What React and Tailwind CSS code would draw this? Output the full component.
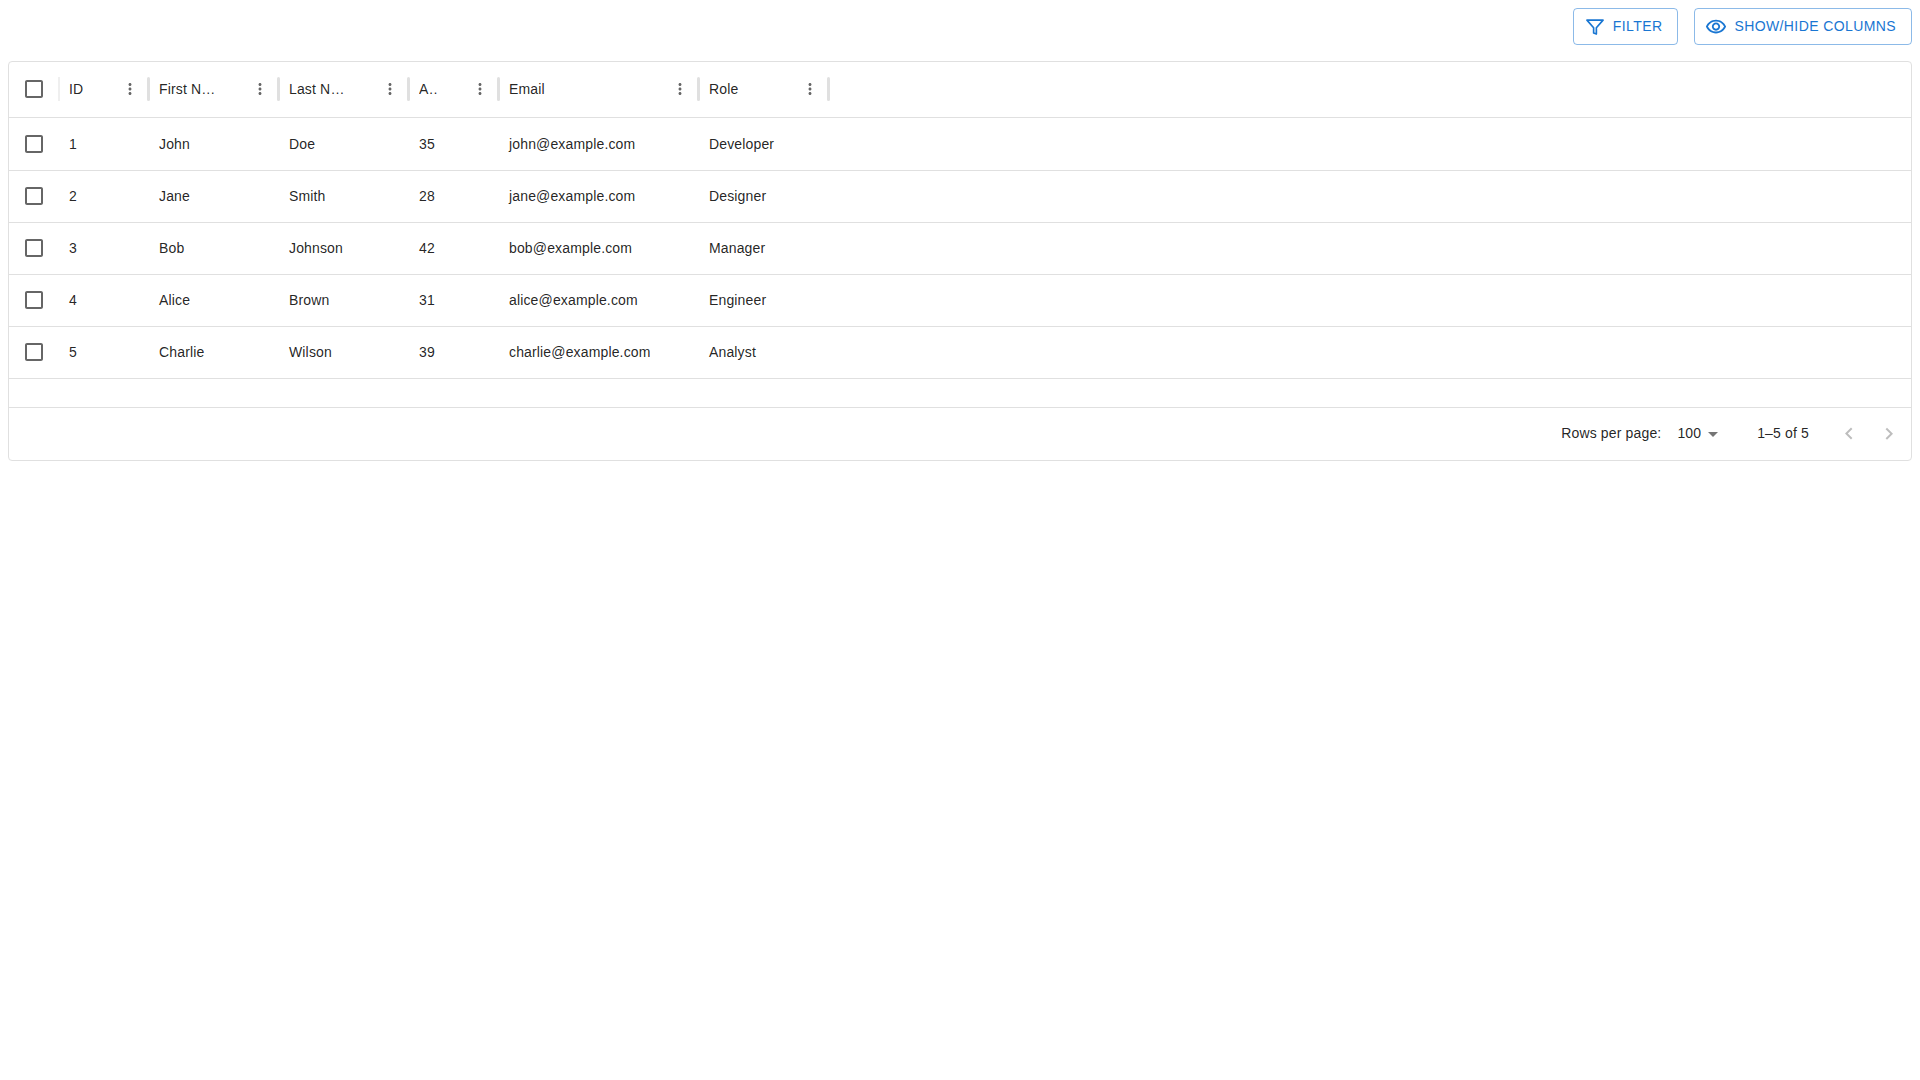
const rows = [
  { id: 1, first: "John", last: "Doe", age: 35, email: "john@example.com", role: "Developer" },
  { id: 2, first: "Jane", last: "Smith", age: 28, email: "jane@example.com", role: "Designer" },
  { id: 3, first: "Bob", last: "Johnson", age: 42, email: "bob@example.com", role: "Manager" },
  { id: 4, first: "Alice", last: "Brown", age: 31, email: "alice@example.com", role: "Engineer" },
  { id: 5, first: "Charlie", last: "Wilson", age: 39, email: "charlie@example.com", role: "Analyst" },
];

const Icon = ({ d, className }) => (
  <svg viewBox="0 0 24 24" fill="currentColor" className={className}>
    <path d={d} />
  </svg>
);

const CHECKBOX = "M19 5v14H5V5h14m0-2H5c-1.1 0-2 .9-2 2v14c0 1.1.9 2 2 2h14c1.1 0 2-.9 2-2V5c0-1.1-.9-2-2-2z";
const MORE = "M12 8c1.1 0 2-.9 2-2s-.9-2-2-2-2 .9-2 2 .9 2 2 2zm0 2c-1.1 0-2 .9-2 2s.9 2 2 2 2-.9 2-2-.9-2-2-2zm0 6c-1.1 0-2 .9-2 2s.9 2 2 2 2-.9 2-2-.9-2-2-2z";
const EYE = "M12 6c3.79 0 7.17 2.13 8.82 5.5C19.17 14.87 15.79 17 12 17s-7.17-2.13-8.82-5.5C4.83 8.13 8.21 6 12 6m0-2C7 4 2.73 7.11 1 11.5 2.73 15.89 7 19 12 19s9.27-3.11 11-7.5C21.27 7.11 17 4 12 4zm0 5c1.38 0 2.5 1.12 2.5 2.5S13.38 14 12 14s-2.5-1.12-2.5-2.5S10.62 9 12 9m0-2c-2.48 0-4.5 2.02-4.5 4.5S9.52 16 12 16s4.5-2.02 4.5-4.5S14.48 7 12 7z";

const Checkbox = ({ className = "" }) => (
  <div className={`flex w-[50px] shrink-0 items-center justify-center ${className}`}>
    <Icon d={CHECKBOX} className="h-6 w-6 text-black/60" />
  </div>
);

const HeaderCell = ({ label, width, titleWidth }) => (
  <div className={`flex shrink-0 items-center pl-2.5 ${width}`}>
    <div className={`overflow-hidden ${titleWidth}`}>
      <div className="min-w-6 truncate">{label}</div>
    </div>
    <Icon d={MORE} className="mr-2 ml-auto h-[18px] w-[18px] shrink-0 text-black/60" />
    <div className="-mr-px h-6 w-[3px] shrink-0 rounded-sm bg-[#e0e0e0]" />
  </div>
);

const Cell = ({ children, width }) => (
  <div className={`shrink-0 pl-2.5 ${width}`}>{children}</div>
);

const OutlineButton = ({ icon, children }) => (
  <button className="flex h-[37px] items-center rounded border border-[#1976d2]/50 pr-[15px] pl-2.5 text-[14px] tracking-[0.4px] text-[#1976d2] uppercase">
    {icon}
    {children}
  </button>
);

const App = () => {
  return (
    <div className="min-h-screen bg-white p-2 font-['Liberation_Sans',Arial,sans-serif] text-[14px] tracking-[0.15px] text-black/87">
      <div className="mb-4 flex justify-end gap-4">
        <OutlineButton
          icon={
            <svg viewBox="0 0 24 24" fill="none" stroke="currentColor" strokeWidth="1.8" strokeLinejoin="round" className="mr-[7px] h-[22px] w-[22px]">
              <path d="M3.2 4.5h17.6l-7.3 8.4v6.8l-3-1.2v-5.6z" />
            </svg>
          }
        >
          Filter
        </OutlineButton>
        <OutlineButton icon={<Icon d={EYE} className="mr-[7px] h-[22px] w-[22px]" />}>
          Show/Hide Columns
        </OutlineButton>
      </div>

      <div className="rounded border border-[#e0e0e0]">
        <div className="flex h-14 items-center border-b border-[#e0e0e0] pb-px">
          <Checkbox />
          <div className="-mx-px h-6 w-0.5 shrink-0 bg-[#efefef]" />
          <HeaderCell label="ID" width="w-[90px]" titleWidth="w-[18px]" />
          <HeaderCell label="First Name" width="w-[130px]" titleWidth="w-[58px]" />
          <HeaderCell label="Last Name" width="w-[130px]" titleWidth="w-[58px]" />
          <HeaderCell label="Age" width="w-[90px]" titleWidth="w-[18px]" />
          <HeaderCell label="Email" width="w-[200px]" titleWidth="w-[128px]" />
          <HeaderCell label="Role" width="w-[130px]" titleWidth="w-[58px]" />
        </div>

        <div>
          {rows.map((row, i) => (
            <div key={row.id} className="flex h-[52px] items-center border-b border-[#e0e0e0] first:h-[53px]">
              <Checkbox className={i === 0 ? "" : "mb-px"} />
              <Cell width="w-[90px]">{row.id}</Cell>
              <Cell width="w-[130px]">{row.first}</Cell>
              <Cell width="w-[130px]">{row.last}</Cell>
              <Cell width="w-[90px]">{row.age}</Cell>
              <Cell width="w-[200px]">{row.email}</Cell>
              <Cell width="w-[130px]">{row.role}</Cell>
            </div>
          ))}
        </div>

        <div className="h-[29px] border-b border-[#e0e0e0]" />

        <div className="flex h-[52px] items-center justify-end">
          <span className="pb-0.5">Rows per page:</span>
          <span className="ml-4 pb-0.5">100</span>
          <Icon d="M7 10l5 5 5-5z" className="h-6 w-6 text-black/54" />
          <span className="ml-8 pb-0.5">1–5 of 5</span>
          <div className="ml-7 flex gap-4 pr-2.5 text-black/26">
            <Icon d="M15.41 16.09l-4.58-4.59 4.58-4.59L14 5.5l-6 6 6 6z" className="h-6 w-6" />
            <Icon d="M8.59 16.34l4.58-4.59-4.58-4.59L10 5.75l6 6-6 6z" className="h-6 w-6" />
          </div>
        </div>
      </div>
    </div>
  );
};

export default App;
